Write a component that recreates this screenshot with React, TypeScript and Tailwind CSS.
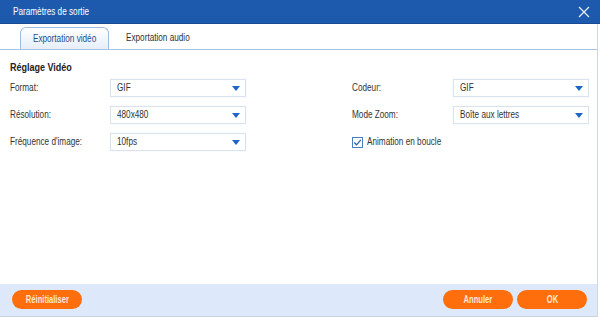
import React from "react";

const font = { fontFamily: '"Liberation Sans", Arial, sans-serif' };

function T({ children, className = "" }: { children: React.ReactNode; className?: string }) {
  return <span className={`inline-block whitespace-nowrap origin-left scale-x-[0.78] ${className}`}>{children}</span>;
}

function Select({ value }: { value: string }) {
  return (
    <div className="w-[136px] h-[18px] bg-white border border-[#d9e2ee] shadow-[0_0_1px_#e6edf6] flex items-center justify-between pl-[6px] pr-[5px] text-[10.5px] text-[#333]">
      <T>{value}</T>
      <svg width="8" height="5" viewBox="0 0 8 5">
        <path d="M0 0 L8 0 L4 5 Z" fill="#1f66c4" />
      </svg>
    </div>
  );
}

function Row({ label, value, labelW }: { label: string; value: string; labelW: string }) {
  return (
    <div className="flex items-center h-[18px]">
      <div className={`${labelW} text-[10.5px] text-[#333]`}>
        <T>{label}</T>
      </div>
      <Select value={value} />
    </div>
  );
}

function Btn({ label, className = "" }: { label: string; className?: string }) {
  return (
    <button className={`w-[70px] h-[19px] rounded-full bg-[#ff6e0d] text-[10px] font-bold text-[#ffe6d6] flex items-center justify-center ${className}`}>
      <span className="inline-block whitespace-nowrap scale-x-[0.76]">{label}</span>
    </button>
  );
}

export default function App() {
  return (
    <div style={font} className="w-[600px] h-[317px] bg-white flex flex-col overflow-hidden">
      <div className="h-[24px] bg-[#1d5aad] border-b border-[#174a92] flex items-center justify-between pl-[13px] pr-[10px]">
        <span className="text-[10.5px] text-white">
          <T>Paramètres de sortie</T>
        </span>
        <svg width="12" height="12" viewBox="0 0 12 12">
          <path d="M1 1 L11 11 M11 1 L1 11" stroke="#e8f0fb" strokeWidth="1.2" />
        </svg>
      </div>
      <div className="flex-1 flex flex-col w-[598px] border-r border-[#cfd6df]">
        <div className="h-[26px] border-b border-[#a8c3e6] flex items-end pl-[20px]">
          <div className="w-[89px] h-[22px] rounded-t-[6px] border border-b-0 border-[#9dbce4] bg-gradient-to-b from-white to-[#e6eefa] flex items-center justify-center text-[10.5px] text-[#23508f]">
            <span className="inline-block whitespace-nowrap scale-x-[0.78]">Exportation vidéo</span>
          </div>
          <div className="h-[22px] flex items-center pl-[17px] text-[10.5px] text-[#333]">
            <T>Exportation audio</T>
          </div>
        </div>
        <div className="flex-1 pl-[10px] pt-[11px]">
          <div className="text-[10px] font-bold text-[#222] h-[13px] leading-[13px]">
            <span className="inline-block whitespace-nowrap origin-left scale-x-[0.9]">Réglage Vidéo</span>
          </div>
          <div className="flex mt-[5px]">
            <div className="flex flex-col gap-[9px] w-[342px]">
              <Row label="Format:" value="GIF" labelW="w-[100px]" />
              <Row label="Résolution:" value="480x480" labelW="w-[100px]" />
              <Row label="Fréquence d'image:" value="10fps" labelW="w-[100px]" />
            </div>
            <div className="flex flex-col gap-[9px]">
              <Row label="Codeur:" value="GIF" labelW="w-[101px]" />
              <Row label="Mode Zoom:" value="Boîte aux lettres" labelW="w-[101px]" />
              <div className="flex items-center h-[18px] gap-[4px]">
                <div className="w-[11px] h-[11px] border border-[#4a7fc6] bg-white flex items-center justify-center">
                  <svg width="9" height="9" viewBox="0 0 9 9">
                    <path d="M1.2 4.5 L3.6 6.8 L7.8 1.8" stroke="#2a63b5" strokeWidth="1.3" fill="none" />
                  </svg>
                </div>
                <span className="text-[10.5px] text-[#333]">
                  <T>Animation en boucle</T>
                </span>
              </div>
            </div>
          </div>
        </div>
        <div className="h-[33px] bg-[#dde9fa] border-b border-[#c9d2dd] flex items-start pt-[6px] pl-[12px] pr-[10px]">
          <Btn label="Réinitialiser" />
          <div className="flex-1" />
          <Btn label="Annuler" />
          <Btn label="OK" className="ml-[4px]" />
        </div>
      </div>
    </div>
  );
}
